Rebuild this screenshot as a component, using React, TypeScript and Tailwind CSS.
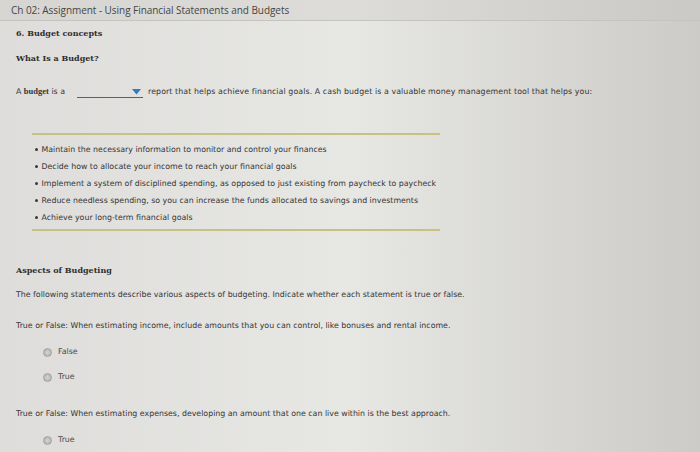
const bullets = [
  "Maintain the necessary information to monitor and control your finances",
  "Decide how to allocate your income to reach your financial goals",
  "Implement a system of disciplined spending, as opposed to just existing from paycheck to paycheck",
  "Reduce needless spending, so you can increase the funds allocated to savings and investments",
  "Achieve your long-term financial goals",
];

const Radio = ({ label, className }: { label: string; className: string }) => (
  <div className={`flex items-center h-[12px] pl-[27px] ${className}`}>
    <span className="w-[9px] h-[9px] rounded-full bg-radial from-[#d6d6d4] to-[#a9a9a7] border border-[#a3a3a1]" />
    <span className="ml-[6px] text-[#4a4a4a]">{label}</span>
  </div>
);

export default function App() {
  return (
    <div className="w-[700px] h-[452px] overflow-hidden bg-linear-to-r from-[#dedddb] via-[#e7e7e4] to-[#cccbc7] text-[7.85px] leading-[12px] text-[#363636] font-['DejaVu_Sans',Verdana,sans-serif]">
      <header className="h-[21px] border-b border-[#c4c3bf] bg-linear-to-r from-[#d6d5d2] via-[#dddcd9] to-[#cac9c5] pl-[11px] flex items-center">
        <h1 className="font-['Open_Sans',sans-serif] text-[10px] text-[#454545] tracking-[-0.05px]">
          Ch 02: Assignment - Using Financial Statements and Budgets
        </h1>
      </header>

      <main className="pl-[16px]">
        <h2 className="mt-[6px] font-['DejaVu_Serif',Georgia,serif] font-bold text-[8px] text-[#2e2e2e]">
          6. Budget concepts
        </h2>
        <h3 className="mt-[13px] font-['DejaVu_Serif',Georgia,serif] font-bold text-[8px] text-[#2e2e2e]">
          What Is a Budget?
        </h3>

        <p className="mt-[21px] flex items-end whitespace-nowrap">
          <span className="w-[61px]">
            A <b className="font-['Liberation_Serif',Georgia,serif] text-[8.5px]">budget</b> is a
          </span>
          <span className="w-[66px] h-[12px] border-b-[1.5px] border-[#2f6aa6] flex items-center justify-end pr-[2px]">
            <svg width="9" height="6" viewBox="0 0 9 6">
              <path d="M0 0 H9 L4.5 5.5 Z" fill="#2f7cc4" />
            </svg>
          </span>
          <span className="ml-[5px] tracking-[0.09px]">
            report that helps achieve financial goals. A cash budget is a valuable money management tool that helps you:
          </span>
        </p>

        <section className="mt-[35px] ml-[16px] w-[408px] border-t-2 border-b-2 border-[#c9c17f] pt-[6px] pb-[3px]">
          <ul>
            {bullets.map((b) => (
              <li key={b} className="flex items-center h-[17px] whitespace-nowrap">
                <span className="ml-[3px] w-[2.5px] h-[2.5px] rounded-full bg-[#3a3a3a]" />
                <span className="ml-[4px]">{b}</span>
              </li>
            ))}
          </ul>
        </section>

        <h3 className="mt-[33px] font-['DejaVu_Serif',Georgia,serif] font-bold text-[8px] text-[#2e2e2e]">
          Aspects of Budgeting
        </h3>
        <p className="mt-[13px] whitespace-nowrap">
          The following statements describe various aspects of budgeting. Indicate whether each statement is true or false.
        </p>

        <p className="mt-[19px] whitespace-nowrap">
          True or False: When estimating income, include amounts that you can control, like bonuses and rental income.
        </p>
        <Radio label="False" className="mt-[14px]" />
        <Radio label="True" className="mt-[13px]" />

        <p className="mt-[25px] whitespace-nowrap">
          True or False: When estimating expenses, developing an amount that one can live within is the best approach.
        </p>
        <Radio label="True" className="mt-[14px]" />
      </main>
    </div>
  );
}
